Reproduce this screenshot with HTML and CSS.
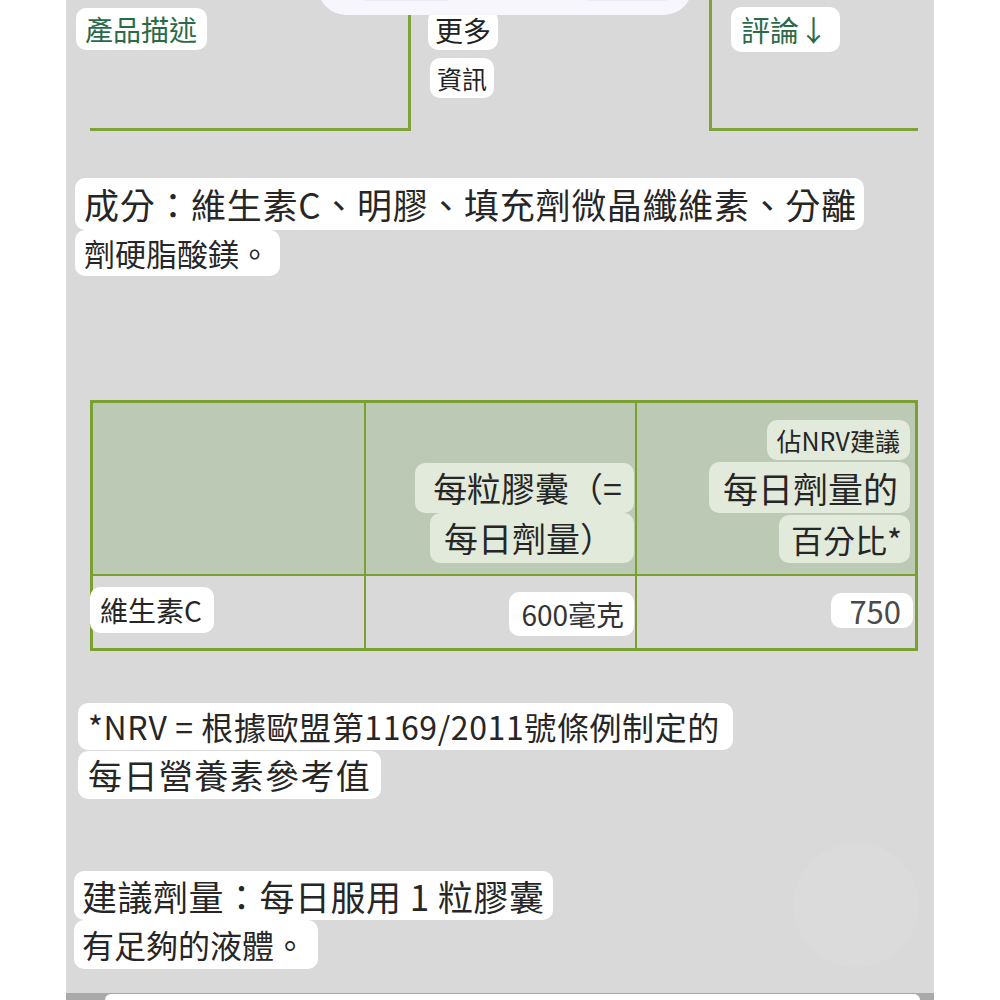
FILE: index.html
```html
<!DOCTYPE html>
<html lang="zh-Hant">
<head>
  <meta charset="UTF-8">
  <meta name="viewport" content="width=device-width, initial-scale=1.0">
  <title>產品描述</title>
  <link rel="stylesheet" href="styles.css">
</head>
<body>
  <div class="screen">
    <div class="toolbar">
      <span class="toolbar-pill left"></span>
      <span class="toolbar-pill right"></span>
    </div>

    <div class="tabs">
      <div class="tab tab-left">
        <span class="chip chip-green chip-desc">產品描述</span>
      </div>
      <div class="tab tab-mid">
        <span class="chip chip-more">更多</span>
        <span class="chip chip-info">資訊</span>
      </div>
      <div class="tab tab-right">
        <span class="chip chip-green chip-review">評論↓</span>
      </div>
    </div>

    <div class="block ingredients">
      <span class="line big">成分：維生素C、明膠、填充劑微晶纖維素、分離</span>
      <span class="line small">劑硬脂酸鎂。</span>
    </div>

    <table class="nutrition">
      <tr class="head">
        <th class="c1"></th>
        <th class="c2">
          <div class="stack">
            <span class="hl hl-a">每粒膠囊（=</span>
            <span class="hl hl-b">每日劑量）</span>
          </div>
        </th>
        <th class="c3">
          <div class="stack gap">
            <span class="hl hl-sm">佔NRV建議</span>
            <span class="hl hl-lg">每日劑量的</span>
            <span class="hl hl-md">百分比*</span>
          </div>
        </th>
      </tr>
      <tr class="body">
        <td class="c1"><span class="val val-name">維生素C</span></td>
        <td class="c2"><span class="val val-amount">600毫克</span></td>
        <td class="c3"><span class="val val-pct">750</span></td>
      </tr>
    </table>

    <div class="block note">
      <span class="line n1">*NRV = 根據歐盟第1169/2011號條例制定的</span>
      <span class="line n2">每日營養素參考值</span>
    </div>

    <div class="block dose">
      <span class="line d1">建議劑量：每日服用 1 粒膠囊</span>
      <span class="line d2">有足夠的液體。</span>
    </div>

    <div class="ghost-bubble"></div>

    <div class="sheet-edge">
      <div class="sheet"></div>
    </div>
  </div>
</body>
</html>
```

FILE: styles.css
```css
body {
  margin: 0;
  background-color: #ffffff;
  font-family: "Noto Sans CJK TC", "Noto Sans", sans-serif;
  color: #262626;
}
.screen {
  position: relative;
  width: 868px;
  height: 1000px;
  margin-left: 66px;
  background-color: #d9d9d9;
  display: flex;
  flex-direction: column;
  overflow: hidden;
}

/* floating toolbar cut off at the top */
.toolbar {
  position: absolute;
  left: 252px;
  top: -45px;
  width: 374px;
  height: 60px;
  border-radius: 28px;
  background-color: #f7f6fc;
  z-index: 2;
}
.toolbar-pill {
  position: absolute;
  top: 0;
  height: 46px;
  border-radius: 18px;
  background-color: #ecebf9;
}
.toolbar-pill.left {
  left: 32px;
  width: 113px;
}
.toolbar-pill.right {
  left: 255px;
  width: 108px;
}

/* tabs */
.tabs {
  display: flex;
  height: 131px;
  flex-shrink: 0;
}
.tab {
  display: flex;
  flex-direction: column;
  align-items: flex-start;
  box-sizing: border-box;
}
.tab-left {
  width: 321px;
  margin-left: 24px;
  border-right: 3px solid #80a23a;
  border-bottom: 3px solid #80a23a;
}
.tab-mid {
  width: 298px;
}
.tab-right {
  width: 209px;
  border-left: 3px solid #80a23a;
  border-bottom: 3px solid #80a23a;
}
.chip {
  background-color: #ffffff;
  border-radius: 10px;
  font-size: 28px;
  line-height: 34px;
  padding: 4px 9px;
  color: #222222;
}
.chip-green {
  color: #2b6a49;
}
.chip-desc {
  margin-left: -14px;
  margin-top: 8px;
  padding-right: 10px;
}
.chip-more {
  margin-left: 17px;
  margin-top: 10px;
  padding: 3px 7px;
}
.chip-info {
  margin-left: 19px;
  margin-top: 8px;
  font-size: 25px;
  padding: 3px 7px;
}
.chip-review {
  margin-left: 19px;
  margin-top: 7px;
  font-size: 29px;
  padding: 5px 12px 6px 10px;
}

/* text blocks */
.block {
  display: flex;
  flex-direction: column;
  align-items: flex-start;
  flex-shrink: 0;
}
.line {
  background-color: #ffffff;
  border-radius: 10px;
}
.ingredients {
  margin-top: 47px;
  margin-left: 9px;
}
.ingredients .big {
  font-size: 35px;
  line-height: 44px;
  letter-spacing: 0.7px;
  padding: 4px 7px 4px 9px;
}
.ingredients .small {
  font-size: 31px;
  line-height: 40px;
  padding: 3px 10px 3px 9px;
}

/* nutrition table */
.nutrition {
  margin-top: 124px;
  margin-left: 24px;
  width: 828px;
  border-collapse: collapse;
  border: 3px solid #7aa02f;
  flex-shrink: 0;
}
.nutrition th,
.nutrition td {
  border: 2px solid #7aa02f;
  padding: 0;
  font-weight: normal;
}
.nutrition .c1 {
  width: 271px;
}
.nutrition .c2 {
  width: 269px;
}
.head th {
  height: 171px;
  background-color: #bbc9b5;
  vertical-align: bottom;
}
.stack {
  display: flex;
  flex-direction: column;
  align-items: flex-end;
  padding-bottom: 11px;
}
.c2 .stack {
  padding-right: 1px;
}
.c3 .stack {
  padding-right: 5px;
}
.stack.gap {
  gap: 2px;
}
.hl {
  background-color: #e1eadb;
  border-radius: 10px;
  color: #262626;
}
.hl-a {
  font-size: 34px;
  line-height: 44px;
  padding: 3px 12px 3px 18px;
}
.hl-b {
  font-size: 34px;
  line-height: 44px;
  padding: 3px 20px 3px 14px;
}
.hl-sm {
  font-size: 25px;
  line-height: 32px;
  padding: 4px 10px;
}
.hl-lg {
  font-size: 35px;
  line-height: 45px;
  padding: 3px 12px 3px 14px;
}
.hl-md {
  font-size: 32px;
  line-height: 42px;
  padding: 3px 8px 3px 12px;
}
.body td {
  height: 72px;
  vertical-align: top;
}
.body .c2,
.body .c3 {
  text-align: right;
}
.val {
  display: inline-block;
  background-color: #ffffff;
  border-radius: 10px;
  font-size: 28px;
  line-height: 38px;
}
.val-name {
  margin-left: -3px;
  margin-top: 11px;
  padding: 4px 12px 4px 10px;
}
.val-amount {
  margin-top: 16px;
  margin-right: 1px;
  padding: 3px 10px 3px 12px;
  color: #333333;
}
.val-pct {
  margin-top: 17px;
  margin-right: 2px;
  padding: 0 12px 0 18px;
  font-size: 31px;
  line-height: 35px;
  color: #4a4a4a;
}

.note {
  margin-top: 52px;
  margin-left: 12px;
}
.note .n1 {
  font-size: 32px;
  line-height: 41px;
  letter-spacing: 0.6px;
  padding: 3px 13px 3px 10px;
}
.note .n2 {
  font-size: 34px;
  line-height: 42px;
  letter-spacing: 1.4px;
  padding: 3px 10px;
  margin-top: 1px;
}
.dose {
  margin-top: 72px;
  margin-left: 8px;
}
.dose .d1 {
  font-size: 35px;
  line-height: 43px;
  letter-spacing: 0.5px;
  padding: 3px 8px;
}
.dose .d2 {
  font-size: 32px;
  line-height: 43px;
  padding: 3px 12px 3px 8px;
}

/* faint chat bubble left behind in the photo */
.ghost-bubble {
  position: absolute;
  left: 727px;
  top: 843px;
  width: 126px;
  height: 124px;
  border-radius: 50%;
  background-color: #dbdbdb;
}

/* bottom sheet peeking in */
.sheet-edge {
  margin-top: auto;
  height: 6px;
  background-color: #a9a9a9;
  padding: 1px 14px 0 39px;
}
.sheet {
  height: 100%;
  background-color: #ffffff;
  border-radius: 30px 30px 0 0;
}
```
